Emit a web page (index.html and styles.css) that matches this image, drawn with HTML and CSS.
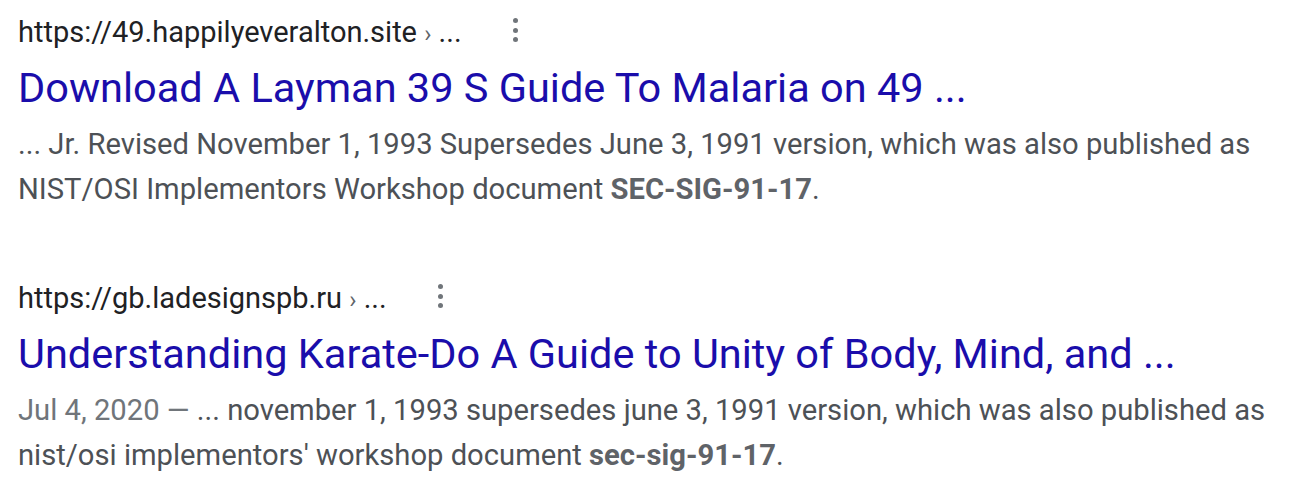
FILE: index.html
```html
<!DOCTYPE html>
<html>
<head>
<meta charset="utf-8">
<link rel="stylesheet" href="styles.css">
</head>
<body>
<div class="results">
  <div class="result">
    <div class="url-row">
      <span class="url">https://49.happilyeveralton.site <span class="sep">›</span> ...</span>
      <span class="more"><i></i><i></i><i></i></span>
    </div>
    <a class="title" href="#">Download A Layman 39 S Guide To Malaria on 49 ...</a>
    <div class="snippet">... Jr. Revised November 1, 1993 Supersedes June 3, 1991 version, which was also published as NIST/OSI Implementors Workshop document <b>SEC-SIG-91-17</b>.</div>
  </div>
  <div class="result">
    <div class="url-row">
      <span class="url">https://gb.ladesignspb.ru <span class="sep">›</span> ...</span>
      <span class="more"><i></i><i></i><i></i></span>
    </div>
    <a class="title" href="#">Understanding Karate-Do A Guide to Unity of Body, Mind, and ...</a>
    <div class="snippet"><span class="date">Jul 4, 2020 — </span>... november 1, 1993 supersedes june 3, 1991 version, which was also published as nist/osi implementors' workshop document <b>sec-sig-91-17</b>.</div>
  </div>
</div>
</body>
</html>
```
FILE: styles.css
```css
html, body {
  margin: 0;
  padding: 0;
  background: #ffffff;
}
body {
  font-family: Roboto, "Liberation Sans", Arial, sans-serif;
  -webkit-font-smoothing: antialiased;
}
.results {
  padding: 12px 0 0 18px;
  display: flex;
  flex-direction: column;
  gap: 66px;
  width: 1265px;
}
.result {
  display: flex;
  flex-direction: column;
}
.url-row {
  display: flex;
  align-items: center;
  height: 40px;
}
.url {
  font-size: 29px;
  color: #202124;
  white-space: nowrap;
}
.sep {
  color: #5f6368;
  font-size: 24px;
}
.more {
  display: flex;
  flex-direction: column;
  gap: 4.5px;
  margin-left: 51px;
  margin-top: -4px;
}
.more i {
  display: block;
  width: 5px;
  height: 5px;
  border-radius: 50%;
  background: #70757a;
}
.title {
  display: block;
  margin-top: 10px;
  font-size: 41.5px;
  line-height: 52px;
  color: #1a0dab;
  text-decoration: none;
  white-space: nowrap;
}
.snippet {
  margin-top: 8px;
  font-size: 29.2px;
  line-height: 45px;
  color: #4d5156;
}
.snippet b {
  font-weight: 700;
  color: #5f6368;
}
.date {
  color: #70757a;
}
```
